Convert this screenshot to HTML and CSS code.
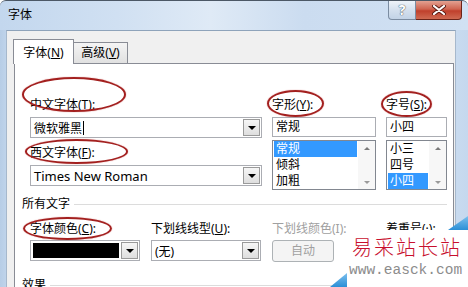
FILE: index.html
```html
<!DOCTYPE html>
<html lang="zh-CN">
<head>
    <meta charset="UTF-8">
    <meta name="viewport" content="width=device-width, initial-scale=1.0">
    <title>字体</title>
    <link rel="stylesheet" href="styles.css">
</head>
<body>
    <div class="window">
        <div class="titlebar">
            <span class="title">字体</span>
            <div class="caption-btns">
                <span class="btn-help">?</span>
                <span class="btn-close">
                    <svg width="14" height="10" viewBox="0 0 14 10">
                        <path d="M2 1 L12 9 M12 1 L2 9" stroke="#5a1c14" stroke-width="4" stroke-linecap="round"/>
                        <path d="M2 1 L12 9 M12 1 L2 9" stroke="#fff" stroke-width="2.2" stroke-linecap="round"/>
                    </svg>
                </span>
            </div>
        </div>

        <div class="frame">
            <div class="client">
                <div class="tabs">
                    <div class="tab active">字体(<u>N</u>)</div>
                    <div class="tab">高级(<u>V</u>)</div>
                </div>

                <div class="panel">
                    <div class="font-grid">
                        <div class="col">
                            <label class="lbl">中文字体(<u>T</u>):</label>
                            <div class="combo">
                                <span class="value">微软雅黑<i class="cursor"></i></span>
                                <span class="drop"></span>
                            </div>
                            <label class="lbl second">西文字体(<u>F</u>):</label>
                            <div class="combo">
                                <span class="value latin">Times New Roman</span>
                                <span class="drop"></span>
                            </div>
                        </div>
                        <div class="col">
                            <label class="lbl">字形(<u>Y</u>):</label>
                            <div class="edit">常规</div>
                            <div class="listbox">
                                <ul>
                                    <li class="sel">常规</li>
                                    <li>倾斜</li>
                                    <li>加粗</li>
                                </ul>
                                <div class="vscroll"><span class="up"></span><span class="down"></span></div>
                            </div>
                        </div>
                        <div class="col">
                            <label class="lbl">字号(<u>S</u>):</label>
                            <div class="edit">小四</div>
                            <div class="listbox">
                                <ul>
                                    <li>小三</li>
                                    <li>四号</li>
                                    <li class="sel">小四</li>
                                </ul>
                                <div class="vscroll"><span class="up"></span><span class="down"></span></div>
                            </div>
                        </div>
                    </div>

                    <div class="group-title first"><span>所有文字</span><i class="rule"></i></div>

                    <div class="color-grid">
                        <div class="col">
                            <label class="lbl">字体颜色(<u>C</u>):</label>
                            <div class="combo small">
                                <span class="swatch"></span>
                                <span class="drop"></span>
                            </div>
                        </div>
                        <div class="col">
                            <label class="lbl">下划线线型(<u>U</u>):</label>
                            <div class="combo small">
                                <span class="value">(无)</span>
                                <span class="drop"></span>
                            </div>
                        </div>
                        <div class="col">
                            <label class="lbl disabled">下划线颜色(I):</label>
                            <div class="auto-btn">自动</div>
                        </div>
                        <div class="col">
                            <label class="lbl">着重号(·):</label>
                        </div>
                    </div>

                    <div class="group-title"><span>效果</span><i class="rule"></i></div>
                </div>
            </div>
        </div>

        <!-- red annotation rings -->
        <span class="ring ring-cn"></span>
        <span class="ring ring-style"></span>
        <span class="ring ring-size"></span>
        <span class="ring ring-west"></span>
        <span class="ring ring-color"></span>

        <div class="watermark">
            <div class="wm-cn">易采站长站</div>
            <div class="wm-url">www.easck.com</div>
        </div>
    </div>
</body>
</html>
```

FILE: styles.css
```css
* {
    box-sizing: border-box;
}
body {
    margin: 0;
    font-family: "Noto Sans", "Noto Sans CJK SC", sans-serif;
    font-size: 12px;
    color: #000;
    background: #fff;
}
u {
    text-decoration: underline;
    text-underline-offset: 1px;
}
.window {
    position: relative;
    width: 468px;
    height: 287px;
    overflow: hidden;
    background: #fff;
}

/* title bar */
.titlebar {
    height: 30px;
    display: flex;
    justify-content: space-between;
    align-items: flex-start;
    padding-left: 8px;
    border-top: 1px solid #4c5866;
    border-radius: 6px 6px 0 0;
    background: linear-gradient(90deg, #c3d7ee 0%, #d0e0f2 25%, #dfeaf6 45%, #cbdcf0 65%, #d1e1f3 100%);
}
.title {
    line-height: 28px;
}
.caption-btns {
    display: flex;
    margin-right: 6px;
}
.btn-help {
    width: 28px;
    height: 19px;
    border: 1px solid #7b8ca1;
    border-top: none;
    border-radius: 0 0 0 4px;
    background: linear-gradient(#eef3f9, #d4e0ee 50%, #c2d3e6);
    text-align: center;
    line-height: 18px;
    font-size: 14px;
    font-weight: bold;
    color: #fff;
    text-shadow: 0 0 1px #3d4a5a, 0 0 1px #3d4a5a;
}
.btn-close {
    width: 46px;
    height: 19px;
    border: 1px solid #6b2318;
    border-left: none;
    border-top: none;
    border-radius: 0 0 4px 0;
    background: linear-gradient(#e3a191, #cf6450 45%, #c0402c 55%, #cf6a52);
    display: flex;
    align-items: center;
    justify-content: center;
}

/* frame and client */
.frame {
    display: flex;
    height: 257px;
    padding: 0 12px 0 6px;
    background: linear-gradient(90deg, #b7cde6, #cadcf0 3%, #cadcf0 96%, #c5d8ee);
}
.client {
    flex: 1;
    background: #f0f0f0;
    border-top: 1px solid #8ea3ba;
    border-left: 1px solid #a6b8cc;
    border-right: 1px solid #a6b8cc;
    padding: 8px 0 0 7px;
}

/* tabs */
.tabs {
    display: flex;
    align-items: flex-end;
    height: 24px;
    margin-left: -1px;
}
.tab {
    width: 55px;
    height: 21px;
    margin-left: -1px;
    border: 1px solid #898c95;
    border-bottom: none;
    background: linear-gradient(#f4f4f4, #e1e1e1);
    text-align: center;
    line-height: 20px;
}
.tab.active {
    width: 61px;
    height: 25px;
    margin-left: 0;
    margin-bottom: -1px;
    position: relative;
    z-index: 1;
    background: #fff;
    line-height: 25px;
}

/* tab page */
.panel {
    width: 440px;
    height: 240px;
    border: 1px solid #898c95;
    border-bottom: none;
    background: #fff;
    padding: 33px 0 0 7px;
}
.lbl {
    display: block;
    line-height: 16px;
    height: 16px;
    white-space: nowrap;
}
.lbl.second {
    margin-top: 7px;
}
.lbl.disabled {
    color: #a0a0a0;
}
.font-grid {
    display: grid;
    grid-template-columns: 232px 104px 61px;
    column-gap: 10px;
    margin-left: 8px;
}
.col {
    display: flex;
    flex-direction: column;
}
.combo {
    position: relative;
    height: 21px;
    margin-top: 4px;
    border: 1px solid #abadb3;
    background: #fff;
    display: flex;
    align-items: center;
}
.combo .value {
    flex: 1;
    padding-left: 3px;
    display: flex;
    align-items: center;
}
.combo .value.latin {
    font-size: 13px;
}
.cursor {
    display: inline-block;
    width: 1px;
    height: 14px;
    margin-left: 1px;
    background: #000;
}
.drop {
    width: 17px;
    height: 17px;
    margin-right: 1px;
    border: 1px solid #9a9a9a;
    background: linear-gradient(#f6f6f6, #dedede);
    display: flex;
    align-items: center;
    justify-content: center;
}
.drop::after {
    content: "";
    border-left: 4px solid transparent;
    border-right: 4px solid transparent;
    border-top: 4px solid #000;
}
.edit {
    height: 20px;
    margin-top: 4px;
    border: 1px solid #abadb3;
    padding-left: 3px;
    line-height: 18px;
}
.listbox {
    display: flex;
    height: 50px;
    margin-top: 3px;
    border: 1px solid #828790;
}
.listbox ul {
    flex: 1;
    list-style: none;
    margin: 0;
    padding: 0 1px 0 1px;
}
.listbox li {
    height: 16px;
    line-height: 16px;
    padding-left: 2px;
}
.listbox li.sel {
    background: #3399ff;
    color: #fff;
}
.vscroll {
    width: 17px;
    display: flex;
    flex-direction: column;
    justify-content: space-between;
    align-items: center;
    padding: 6px 0 5px;
    background: #f7f7f7;
}
.vscroll .up {
    border-left: 3px solid transparent;
    border-right: 3px solid transparent;
    border-bottom: 3px solid #7a7a7a;
}
.vscroll .down {
    border-left: 3px solid transparent;
    border-right: 3px solid transparent;
    border-top: 3px solid #9a9a9a;
}

/* group headers */
.group-title {
    display: flex;
    align-items: center;
    gap: 4px;
    margin-right: 6px;
    line-height: 16px;
    margin-top: 15px;
}
.group-title.first {
    margin-top: 6px;
}
.group-title .rule {
    flex: 1;
    height: 1px;
    background: #dcdcdc;
}

.color-grid {
    display: grid;
    grid-template-columns: 111px 111px 104px 70px;
    column-gap: 10px;
    margin-left: 8px;
    margin-top: 9px;
}
.combo.small {
    width: 110px;
    margin-top: 3px;
}
.swatch {
    flex: 1;
    height: 15px;
    margin: 0 2px 0 2px;
    background: #000;
}
.auto-btn {
    width: 62px;
    height: 22px;
    margin-top: 3px;
    border: 1px solid #adb2b5;
    border-radius: 3px;
    background: #f4f4f4;
    color: #a0a0a0;
    text-align: center;
    line-height: 20px;
}

/* red rings drawn over the dialog */
.ring {
    position: absolute;
    border: 2px solid #a3201f;
    border-radius: 50%;
    box-shadow: 0 0 1px #c55;
}
.ring-cn {
    left: 22px;
    top: 77px;
    width: 104px;
    height: 35px;
}
.ring-style {
    left: 267px;
    top: 90px;
    width: 57px;
    height: 27px;
}
.ring-size {
    left: 381px;
    top: 91px;
    width: 51px;
    height: 26px;
}
.ring-west {
    left: 25px;
    top: 139px;
    width: 103px;
    height: 25px;
}
.ring-color {
    left: 23px;
    top: 217px;
    width: 89px;
    height: 23px;
}

/* site watermark */
.watermark {
    position: absolute;
    left: 347px;
    top: 230px;
    width: 121px;
    height: 57px;
    background: #fff;
}
.watermark::before {
    content: "";
    position: absolute;
    right: 0;
    top: -14px;
    width: 20px;
    height: 14px;
    background: linear-gradient(#7cc0ee, #2b8fd6);
    clip-path: polygon(0 100%, 100% 0, 100% 100%);
}
.watermark::after {
    content: "";
    position: absolute;
    left: -17px;
    bottom: 0;
    width: 17px;
    height: 14px;
    background: linear-gradient(#7cc0ee, #2b8fd6);
    clip-path: polygon(0 100%, 100% 0, 100% 100%);
}
.wm-cn {
    margin-top: 5px;
    padding-left: 5px;
    font-family: "Noto Sans CJK SC", sans-serif;
    font-size: 20px;
    font-weight: 300;
    letter-spacing: 2px;
    line-height: 24px;
    color: #c8102e;
}
.wm-url {
    margin-top: 3px;
    padding-left: 2px;
    font-family: "Liberation Mono", monospace;
    font-size: 14.5px;
    line-height: 16px;
    color: #8c8c8c;
}
```
